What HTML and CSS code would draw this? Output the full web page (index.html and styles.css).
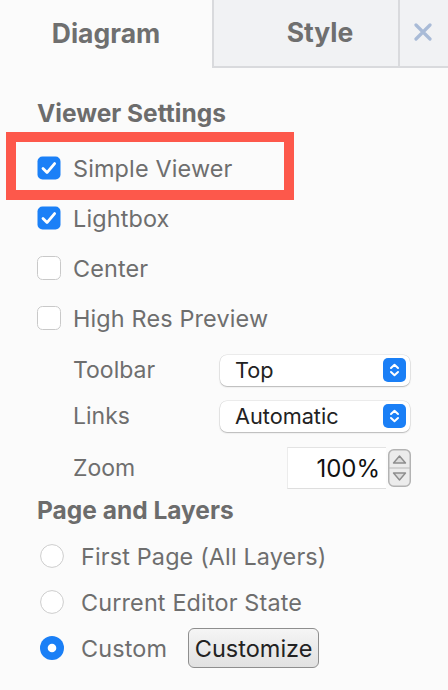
FILE: index.html
```html
<!DOCTYPE html>
<html>
<head>
<meta charset="utf-8">
<link rel="stylesheet" href="styles.css">
</head>
<body>
<div class="panel">
  <div class="tabs">
    <div class="tab tab-active">Diagram</div>
    <div class="tab tab-style">Style</div>
    <div class="tab tab-close">
      <svg width="18" height="18" viewBox="0 0 18 18"><path d="M2 2 L16 16 M16 2 L2 16" stroke="#a9bbd7" stroke-width="3.2" stroke-linecap="round"/></svg>
    </div>
  </div>

  <div class="content">
    <div class="heading h-viewer">Viewer Settings</div>
    <div class="checks">
      <div class="highlight"></div>
      <div class="row">
        <svg class="cb" width="24" height="24" viewBox="0 0 24 24"><rect x="0.5" y="0.5" width="23" height="23" rx="5" fill="#1b80f7"/><path d="M6 12.6 L10 16.6 L17.6 7.6" fill="none" stroke="#fff" stroke-width="2.8" stroke-linecap="round" stroke-linejoin="round"/></svg>
        <span class="label">Simple Viewer</span>
      </div>
      <div class="row">
        <svg class="cb" width="24" height="24" viewBox="0 0 24 24"><rect x="0.5" y="0.5" width="23" height="23" rx="5" fill="#1b80f7"/><path d="M6 12.6 L10 16.6 L17.6 7.6" fill="none" stroke="#fff" stroke-width="2.8" stroke-linecap="round" stroke-linejoin="round"/></svg>
        <span class="label">Lightbox</span>
      </div>
      <div class="row">
        <svg class="cb" width="24" height="24" viewBox="0 0 24 24"><rect x="0.5" y="0.5" width="23" height="23" rx="5" fill="#fff" stroke="#c9c9c9"/></svg>
        <span class="label">Center</span>
      </div>
      <div class="row">
        <svg class="cb" width="24" height="24" viewBox="0 0 24 24"><rect x="0.5" y="0.5" width="23" height="23" rx="5" fill="#fff" stroke="#c9c9c9"/></svg>
        <span class="label">High Res Preview</span>
      </div>
    </div>

    <div class="settings">
      <div class="srow srow-sel">
        <span class="slabel">Toolbar</span>
        <div class="select">
          <span class="sel-text">Top</span>
          <svg class="sel-btn" width="23" height="24" viewBox="0 0 23 24"><rect width="23" height="24" rx="5" fill="#1a7ff6"/><path d="M8 10 L11.5 6.8 L15 10 M8 14 L11.5 17.2 L15 14" fill="none" stroke="#fff" stroke-width="2" stroke-linecap="round" stroke-linejoin="round"/></svg>
        </div>
      </div>
      <div class="srow srow-sel">
        <span class="slabel">Links</span>
        <div class="select">
          <span class="sel-text">Automatic</span>
          <svg class="sel-btn" width="23" height="24" viewBox="0 0 23 24"><rect width="23" height="24" rx="5" fill="#1a7ff6"/><path d="M8 10 L11.5 6.8 L15 10 M8 14 L11.5 17.2 L15 14" fill="none" stroke="#fff" stroke-width="2" stroke-linecap="round" stroke-linejoin="round"/></svg>
        </div>
      </div>
      <div class="srow srow-zoom">
        <span class="slabel">Zoom</span>
        <div class="zoomctl">
          <div class="zinput">100%</div>
          <svg class="spinner" width="23" height="38" viewBox="0 0 23 38"><rect x="0.75" y="0.75" width="21.5" height="36.5" rx="5" fill="#ececec" stroke="#b3b3b3" stroke-width="1.5"/><line x1="1" y1="19" x2="22" y2="19" stroke="#b8b8b8" stroke-width="1"/><path d="M5.5 14 L11.5 7 L17.5 14 Z" fill="#dcdcdc" stroke="#8d8d8d" stroke-width="1.4" stroke-linejoin="round"/><path d="M5.5 24 L11.5 31 L17.5 24 Z" fill="#dcdcdc" stroke="#8d8d8d" stroke-width="1.4" stroke-linejoin="round"/></svg>
        </div>
      </div>
    </div>

    <div class="heading h-pages">Page and Layers</div>
    <div class="radios">
      <div class="rrow">
        <svg class="radio" width="24" height="24" viewBox="0 0 24 24"><circle cx="12" cy="12" r="11.4" fill="#fff" stroke="#cdcdcd" stroke-width="1"/></svg>
        <span class="label">First Page (All Layers)</span>
      </div>
      <div class="rrow">
        <svg class="radio" width="24" height="24" viewBox="0 0 24 24"><circle cx="12" cy="12" r="11.4" fill="#fff" stroke="#cdcdcd" stroke-width="1"/></svg>
        <span class="label">Current Editor State</span>
      </div>
      <div class="rrow">
        <svg class="radio" width="24" height="24" viewBox="0 0 24 24"><circle cx="12" cy="12" r="12" fill="#1a7ff6"/><circle cx="12" cy="12" r="4.3" fill="#fff"/></svg>
        <span class="label">Custom</span>
        <button class="btn">Customize</button>
      </div>
    </div>
  </div>
</div>
</body>
</html>
```

FILE: styles.css
```css
html, body {
  margin: 0;
  padding: 0;
  background: #fbfbfb;
}
body {
  width: 448px;
  height: 690px;
  overflow: hidden;
  font-family: Inter, "Liberation Sans", sans-serif;
  color: #6e6e6e;
}
.panel {
  position: relative;
  width: 448px;
}
.tabs {
  display: flex;
  height: 68px;
}
.tab {
  box-sizing: border-box;
  height: 68px;
  display: flex;
  align-items: center;
  justify-content: center;
  font-weight: 700;
  font-size: 26.5px;
  color: #6f6f6f;
  padding-bottom: 2px;
}
.tab-active {
  width: 212px;
  background: #fbfbfb;
}
.tab-style {
  width: 186px;
  background: #f1f2f4;
  border-left: 2px solid #d9dadd;
  border-bottom: 2px solid #d9dadd;
  padding-left: 28px;
}
.tab-close {
  width: 50px;
  background: #f1f2f4;
  border-left: 2px solid #d9dadd;
  border-bottom: 2px solid #d9dadd;
  padding-right: 2px;
}
.content {
  padding-left: 37px;
}
.heading {
  font-weight: 700;
  font-size: 24.5px;
  color: #6c6c6c;
  display: flex;
  align-items: center;
}
.h-viewer {
  height: 30px;
  margin-top: 30px;
  margin-bottom: 15px;
}
.checks {
  position: relative;
}
.highlight {
  position: absolute;
  left: -31px;
  top: -11px;
  width: 288px;
  height: 68px;
  box-sizing: border-box;
  border: 10px solid #fd584b;
}
.row {
  height: 50px;
  display: flex;
  align-items: center;
}
.cb {
  flex: none;
  display: block;
}
.label {
  font-size: 23.4px;
  letter-spacing: 0.15px;
  color: #6e6e6e;
  margin-left: 12px;
}
.settings {
  padding-left: 36px;
  margin-top: 4px;
}
.srow {
  display: flex;
  align-items: center;
}
.srow-sel {
  height: 46px;
}
.srow-zoom {
  height: 58px;
}
.slabel {
  width: 147px;
  font-size: 23px;
  color: #6e6e6e;
}
.select {
  box-sizing: border-box;
  width: 190px;
  height: 31px;
  background: #fff;
  border-radius: 7px;
  box-shadow: 0 0 0 0.5px rgba(0,0,0,0.12), 0 1px 1.5px rgba(0,0,0,0.22);
  display: flex;
  align-items: center;
  justify-content: space-between;
  padding: 0 4px 0 15px;
}
.sel-text {
  font-size: 21.7px;
  color: #222;
}
.sel-btn {
  display: block;
}
.zoomctl {
  width: 191px;
  display: flex;
  justify-content: flex-end;
  align-items: center;
  gap: 2px;
}
.zinput {
  box-sizing: border-box;
  width: 99px;
  height: 42px;
  background: #fff;
  border-top: 1px solid #e3e3e3;
  border-left: 1px solid #ececec;
  border-bottom: 1px solid #dedede;
  font-size: 24px;
  color: #111;
  display: flex;
  align-items: center;
  justify-content: flex-end;
  padding-right: 6px;
}
.spinner {
  display: block;
}
.h-pages {
  height: 26px;
}
.radios {
  margin-top: 10px;
}
.rrow {
  height: 46px;
  display: flex;
  align-items: center;
  padding-left: 3px;
}
.radio {
  display: block;
  flex: none;
}
.rrow .label {
  margin-left: 17px;
}
.btn {
  margin-left: 21px;
  box-sizing: border-box;
  width: 131px;
  height: 40px;
  border: 1px solid #8e8e8e;
  border-radius: 6px;
  background: linear-gradient(#f5f5f5, #e1e1e1);
  font-family: Inter, "Liberation Sans", sans-serif;
  font-size: 23.5px;
  color: #222;
  padding: 0;
}
```
